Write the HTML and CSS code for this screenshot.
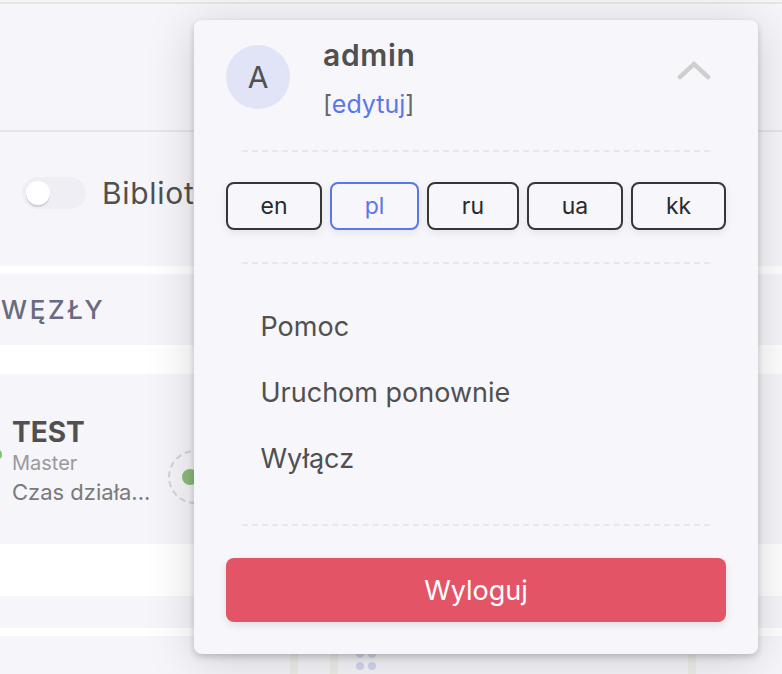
FILE: index.html
```html
<!DOCTYPE html>
<html lang="pl">
<head>
<meta charset="utf-8">
<title>Panel</title>
<link rel="stylesheet" href="styles.css">
</head>
<body>
<div class="page">
  <header class="topbar"></header>
  <section class="toolbar">
    <span class="toggle"><span class="knob"></span></span>
    <span class="lib-label">Biblioteka</span>
  </section>
  <div class="section-head"><span class="section-title">WĘZŁY</span></div>
  <div class="node-row">
    <span class="dot-edge"></span>
    <div class="node-info">
      <div class="node-name">TEST</div>
      <div class="node-role">Master</div>
      <div class="node-uptime">Czas działa...</div>
    </div>
    <span class="ring"><span class="ring-dot"></span></span>
  </div>
  <div class="gap-white"></div>
  <div class="strip"></div>
  <div class="lower">
    <span class="stripe"></span>
    <span class="stripe"></span>
    <span class="dots"><i></i><i></i><i></i><i></i></span>
    <span class="stripe stripe-far"></span>
  </div>
</div>
<aside class="panel">
  <div class="user">
    <div class="avatar">A</div>
    <div class="user-text">
      <div class="user-name">admin</div>
      <div class="user-edit">[<a class="edit-link">edytuj</a>]</div>
    </div>
    <svg class="chevron" width="34" height="20" viewBox="0 0 34 20"><path d="M3 17 L17 4 L31 17" fill="none" stroke="#cfcfcf" stroke-width="4.5" stroke-linecap="round" stroke-linejoin="miter"/></svg>
  </div>
  <hr class="rule rule-a">
  <div class="langs">
    <button class="lang lang-en">en</button>
    <button class="lang lang-pl">pl</button>
    <button class="lang lang-ru">ru</button>
    <button class="lang lang-ua">ua</button>
    <button class="lang lang-kk">kk</button>
  </div>
  <hr class="rule rule-b">
  <nav class="menu">
    <div class="menu-item">Pomoc</div>
    <div class="menu-item">Uruchom ponownie</div>
    <div class="menu-item">Wyłącz</div>
  </nav>
  <hr class="rule rule-c">
  <button class="logout">Wyloguj</button>
</aside>
</body>
</html>
```
FILE: styles.css
```css
* { box-sizing: border-box; }
html, body { margin: 0; height: 674px; overflow: hidden; }
body { font-family: Inter, "Liberation Sans", sans-serif; background: #f5f5fa; color: #505050; position: relative; }
.page { width: 782px; height: 674px; display: flex; flex-direction: column; overflow: hidden; }
.topbar { height: 130px; flex: none; border-top: 2px solid #e6e6e0; margin-top: 2px; border-bottom: 2px solid #e6e6ef; }
.toolbar { height: 134px; flex: none; display: flex; align-items: center; padding: 0 0 12px 22px; gap: 16px; }
.toggle { width: 64px; height: 32px; border-radius: 16px; background: #eeeef4; padding: 4px; flex: none; }
.knob { display: block; width: 24px; height: 24px; border-radius: 50%; background: #fff; box-shadow: 0 2px 0 #cfcfd4; }
.lib-label { font-size: 30px; letter-spacing: .7px; color: #505050; white-space: nowrap; }
.section-head { height: 79px; flex: none; border-top: 8px solid #fff; display: flex; align-items: center; padding: 0 0 1px 1px; }
.section-title { font-size: 26px; font-weight: 500; letter-spacing: 2.6px; color: #6a6a80; }
.node-row { height: 199px; flex: none; border-top: 29px solid #fff; display: flex; align-items: center; padding-left: 12px; position: relative; }
.dot-edge { position: absolute; left: -9px; top: 75px; width: 11px; height: 11px; border-radius: 50%; background: #7cc36e; }
.node-info { width: 156px; flex: none; margin-top: 6px; }
.node-name { font-size: 28px; font-weight: 700; line-height: 30px; color: #505050; margin-bottom: 3px; }
.node-role { font-size: 20px; line-height: 27px; color: #9a9a9a; }
.node-uptime { font-size: 22px; line-height: 30px; color: #7a7a7a; white-space: nowrap; }
.ring { width: 54px; height: 54px; border-radius: 50%; border: 2px dashed #d4d4d4; flex: none; display: flex; align-items: center; padding-left: 12px; margin-top: 35px; }
.ring-dot { width: 16px; height: 16px; border-radius: 50%; background: #8cbd7c; flex: none; }
.gap-white { height: 52px; flex: none; background: #fff; }
.strip { height: 32px; flex: none; }
.lower { height: 46px; flex: none; border-top: 8px solid #fff; display: flex; align-items: flex-end; padding-left: 290px; gap: 32px; }
.stripe { width: 8px; height: 30px; background: #efeeea; }
.stripe-far { margin-left: 280px; }
.dots { display: grid; grid-template-columns: 8px 8px; gap: 4px; margin: 0 0 4px -14px; }
.dots i { width: 8px; height: 8px; border-radius: 50%; background: #d4d6ef; }

.panel { position: absolute; left: 194px; top: 20px; width: 564px; height: 634px; background: #f6f6fb; border-radius: 8px; box-shadow: 0 3px 6px rgba(0,0,0,.18), 0 6px 48px rgba(0,0,0,.17); padding: 24px 32px 32px; display: flex; flex-direction: column; }
.user { display: flex; align-items: flex-start; height: 82px; position: relative; flex: none; }
.avatar { width: 64px; height: 64px; border-radius: 50%; background: #e0e4f6; color: #505050; font-size: 30px; display: flex; align-items: center; justify-content: center; flex: none; margin-top: 1px; }
.user-text { margin-left: 33px; margin-top: -7px; }
.user-name { font-size: 30px; font-weight: 600; line-height: 36px; color: #505050; letter-spacing: .7px; }
.user-edit { font-size: 25px; line-height: 36px; margin-top: 13px; color: #666; }
.edit-link { color: #5a77ea; }
.chevron { position: absolute; right: 15px; top: 16px; }
.rule { border: 0; border-top: 2px dashed #e6e6ee; margin: 0 16px; flex: none; height: 0; }
.rule-a { margin-top: 24px; }
.langs { display: flex; gap: 8px; margin-top: 30px; flex: none; }
.lang { height: 48px; border: 2px solid #363636; border-radius: 8px; background: #f6f6fb; font: 400 23px Inter, sans-serif; color: #2a2a2a; box-shadow: 0 3px 8px rgba(0,0,0,.08); padding: 0; }
.lang-en { width: 96px; }
.lang-pl { width: 89px; border-color: #5a77ea; color: #5a77ea; font-weight: 400; }
.lang-ru { width: 92px; }
.lang-ua { width: 96px; }
.lang-kk { width: 95px; }
.rule-b { margin-top: 32px; }
.menu { padding: 30px 0 0 34.5px; flex: none; height: 260px; }
.menu-item { font-size: 27px; line-height: 66px; color: #505050; }
.rule-c { margin-top: 0; }
.logout { margin-top: 32px; height: 64px; width: 500px; flex: none; border: 0; border-radius: 8px; background: #e45467; color: #fff; font: 400 27px Inter, sans-serif; box-shadow: 0 3px 8px rgba(0,0,0,.1); }
```
